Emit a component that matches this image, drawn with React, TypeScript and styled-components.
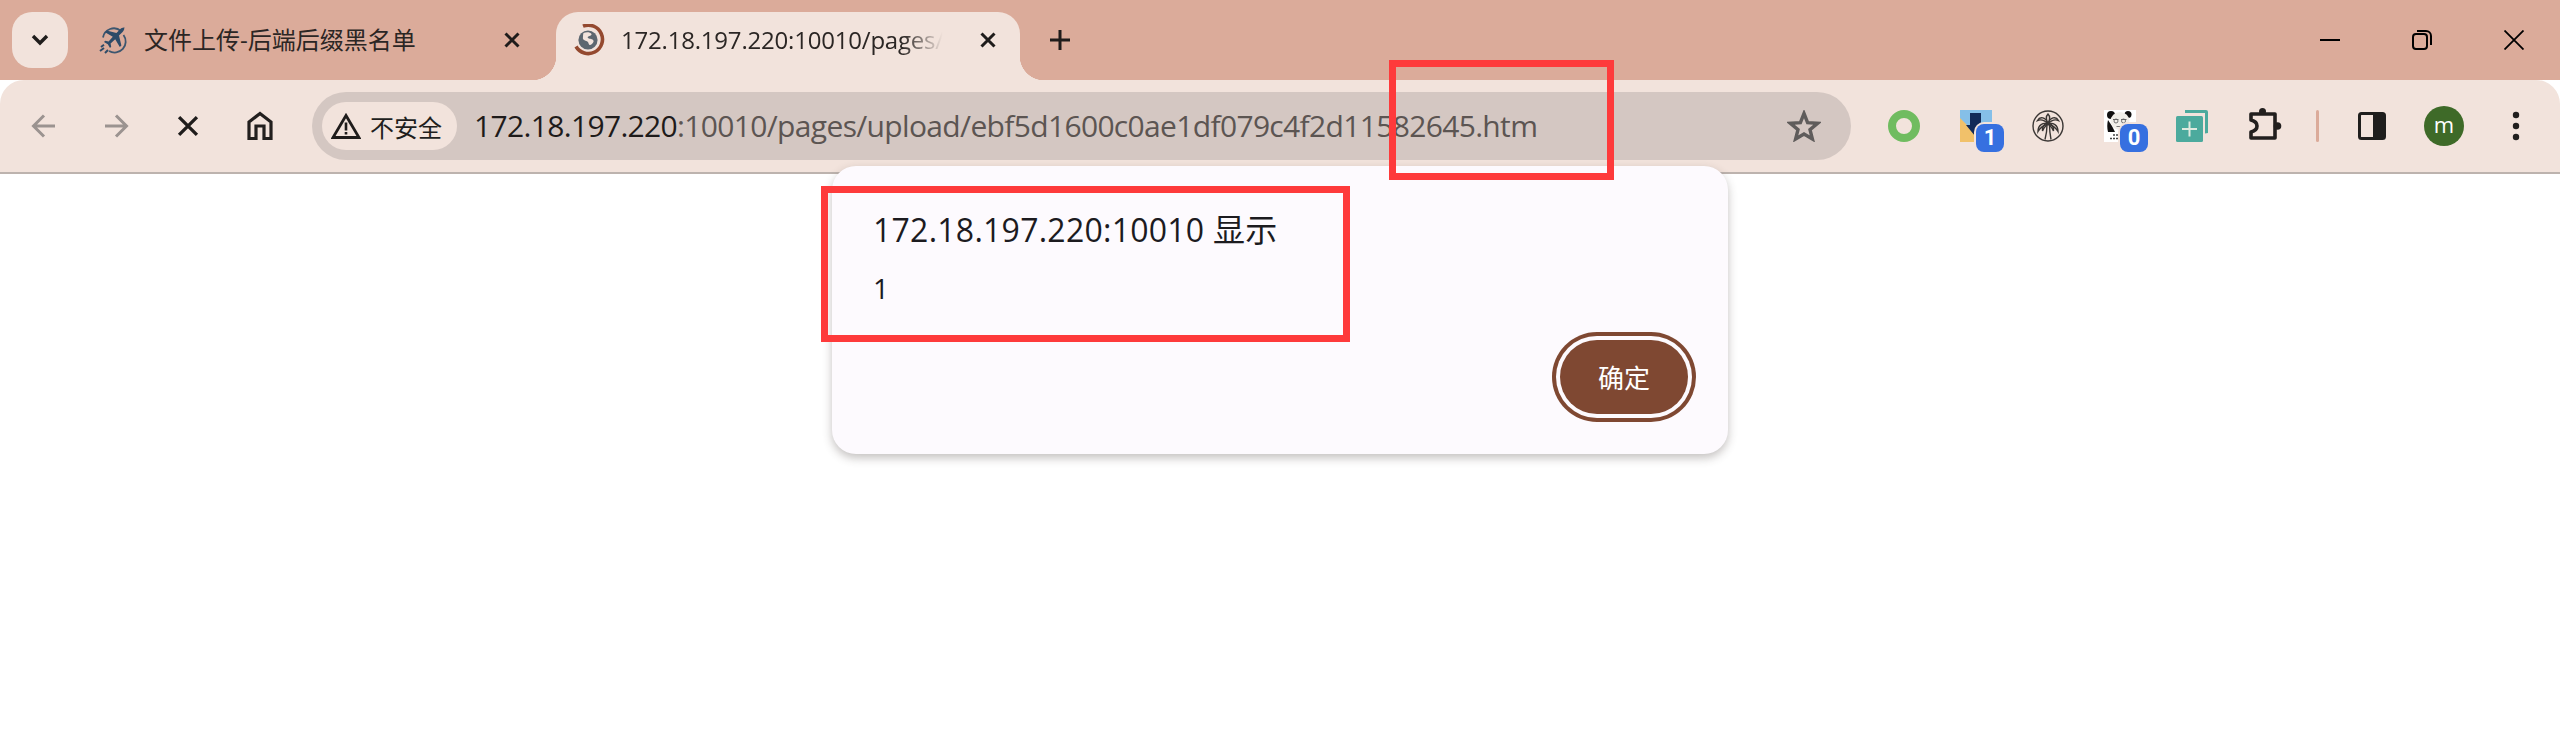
import React from "react";
import styled, { createGlobalStyle } from "styled-components";

const latin = `"Open Sans", "Noto Sans CJK SC", sans-serif`;
const stripBg = "#dbab9a";
const barBg = "#f2e3dc";
const ink = "#211e1d";

const Global = createGlobalStyle`
  html, body { margin: 0; padding: 0; background: #fff; overflow: hidden; }
  body { width: 2560px; height: 752px; font-family: ${latin}; }
`;

const Page = styled.div`
  position: relative;
  width: 2560px;
  height: 752px;
  background: #fff;
  overflow: hidden;
`;

const TabStrip = styled.header`
  display: flex;
  height: 80px;
  padding-left: 12px;
  background: ${stripBg};
  box-sizing: border-box;
`;

const TabSearch = styled.button`
  flex: none;
  width: 56px;
  height: 56px;
  margin-top: 12px;
  border: 0;
  padding: 0;
  border-radius: 20px;
  background: ${barBg};
  display: flex;
  align-items: center;
  justify-content: center;
`;

const Tab = styled.div<{ $active?: boolean }>`
  flex: none;
  position: relative;
  box-sizing: border-box;
  display: flex;
  align-items: center;
  height: 68px;
  margin-top: 12px;
  padding-bottom: 12px;
  width: ${(p) => (p.$active ? "464px" : "488px")};
  padding-left: ${(p) => (p.$active ? "17px" : "30px")};
  padding-right: ${(p) => (p.$active ? "16px" : "28px")};
  gap: 16px;
  border-radius: 22px 22px 0 0;
  background: ${(p) => (p.$active ? barBg : "transparent")};
  ${(p) =>
    p.$active
      ? `
    &::before, &::after {
      content: "";
      position: absolute;
      bottom: 0;
      width: 24px;
      height: 24px;
    }
    &::before { left: -24px; background: radial-gradient(circle at 0 0, transparent 24px, ${barBg} 24.5px); }
    &::after { right: -24px; background: radial-gradient(circle at 100% 0, transparent 24px, ${barBg} 24.5px); }
  `
      : ""}
`;

const TabTitle = styled.span<{ $fade?: boolean }>`
  flex: 1;
  min-width: 0;
  white-space: nowrap;
  font-size: 24px;
  line-height: 32px;
  color: #2b2624;
  letter-spacing: ${(p) => (p.$fade ? "-0.2px" : "0")};
  ${(p) =>
    p.$fade
      ? `-webkit-mask-image: linear-gradient(to right, #000 84%, transparent 96%);
         mask-image: linear-gradient(to right, #000 84%, transparent 96%);`
      : ""}
`;

const TabClose = styled.span`
  flex: none;
  width: 32px;
  height: 32px;
  display: flex;
  align-items: center;
  justify-content: center;
`;

const NewTab = styled.span`
  flex: none;
  width: 32px;
  height: 32px;
  margin: 24px 0 0 24px;
  display: flex;
  align-items: center;
  justify-content: center;
`;

const Spacer = styled.div`
  flex: 1;
`;

const WindowButton = styled.span`
  flex: none;
  width: 92px;
  height: 80px;
  display: flex;
  align-items: center;
  justify-content: center;
`;

const Toolbar = styled.nav`
  position: relative;
  display: flex;
  align-items: center;
  height: 94px;
  box-sizing: border-box;
  padding-left: 8px;
  background: ${barBg};
  border-bottom: 2px solid #bdb3ae;
  border-radius: 24px 24px 0 0;
`;

const Slot = styled.span`
  flex: none;
  position: relative;
  width: 72px;
  height: 48px;
  display: flex;
  align-items: center;
  justify-content: center;
`;

const Omnibox = styled.div`
  flex: none;
  display: flex;
  align-items: center;
  width: 1539px;
  height: 68px;
  margin-left: 16px;
  padding: 0 30px 0 10px;
  box-sizing: border-box;
  border-radius: 34px;
  background: #d4c7c2;
`;

const SecurityChip = styled.div`
  flex: none;
  display: flex;
  align-items: center;
  gap: 9px;
  width: 135px;
  height: 48px;
  padding-left: 9px;
  box-sizing: border-box;
  border-radius: 24px;
  background: ${barBg};
  font-size: 24px;
  color: ${ink};
`;

const Url = styled.div`
  flex: 1;
  margin-left: 17px;
  font-size: 30px;
  line-height: 40px;
  white-space: nowrap;
  color: #5c5552;
  letter-spacing: -0.66px;
`;

const Host = styled.span`
  color: #1e1b1a;
`;

const Actions = styled.div`
  display: flex;
  align-items: center;
  margin-left: 17px;
`;

const Separator = styled.span`
  flex: none;
  width: 3px;
  height: 32px;
  margin: 0 17px 0 16px;
  border-radius: 2px;
  background: ${stripBg};
`;

const Badge = styled.span`
  position: absolute;
  left: 36px;
  top: 22px;
  width: 28px;
  height: 28px;
  border-radius: 8px;
  background: #3670e0;
  box-shadow: 0 0 0 2px ${barBg};
  color: #fff;
  font: 700 22px/28px "Roboto", sans-serif;
  text-align: center;
`;

const Avatar = styled.span`
  width: 40px;
  height: 40px;
  border-radius: 50%;
  background: #3e6a28;
  color: #fff;
  font-size: 22px;
  line-height: 36px;
  text-align: center;
`;

const Dialog = styled.section`
  position: absolute;
  left: 832px;
  top: 166px;
  width: 896px;
  height: 288px;
  box-sizing: border-box;
  padding: 44px 32px 0 41px;
  background: #fdfafe;
  border-radius: 24px;
  box-shadow: 0 4px 10px rgba(60, 50, 45, 0.3);
`;

const DialogTitle = styled.div`
  font-size: 32px;
  line-height: 40px;
  color: #1c1b1f;
  letter-spacing: 0.25px;
`;

const DialogMessage = styled.div`
  margin-top: 22px;
  font-size: 28px;
  line-height: 32px;
  color: #1c1b1f;
`;

const DialogActions = styled.div`
  display: flex;
  justify-content: flex-end;
  margin-top: 36px;
  padding-right: 8px;
`;

const ConfirmButton = styled.button`
  width: 128px;
  height: 74px;
  border: 0;
  padding: 0;
  border-radius: 37px;
  background: #7f4832;
  color: #fff;
  font: 26px ${latin};
  box-shadow: 0 0 0 4px #fdfafe, 0 0 0 8px #7f4832;
`;

const Callout = styled.div<{ $l: number; $t: number; $w: number; $h: number }>`
  position: absolute;
  left: ${(p) => p.$l}px;
  top: ${(p) => p.$t}px;
  width: ${(p) => p.$w}px;
  height: ${(p) => p.$h}px;
  box-sizing: border-box;
  border: 7px solid #fe3a3b;
`;

const X = ({ s = 16, w = 3, c = "#1f1c1b" }: { s?: number; w?: number; c?: string }) => (
  <svg width={s} height={s} viewBox="0 0 16 16">
    <path d="M1.5 1.5 14.5 14.5M14.5 1.5 1.5 14.5" stroke={c} strokeWidth={w} fill="none" />
  </svg>
);

const PlaneIcon = () => (
  <svg width="30" height="30" viewBox="0 0 30 30" fill="none">
    <path d="M5 12.5A11 11 0 0 1 23 6M25.5 10A11 11 0 0 1 11 26" stroke="#3c566f" strokeWidth="1.8" />
    <path d="M27 2.8c-1.6-.6-3.6.2-5 1.6l-3.6 3.6L8.6 5.6 7 7.2l7.8 4.6-4.2 4.6-3.4-.6-1.2 1.2 3.8 2.2 2.2 3.8 1.2-1.2-.6-3.4 4.6-4.2 4.6 7.8 1.6-1.6-2.4-9.8 3.6-3.6c1.4-1.4 2.2-3.4 1.4-5z" fill="#2e4b68" />
    <path d="M2 26l4-3M3 22l3-2.2M7 28l3-3" stroke="#2e4b68" strokeWidth="2" />
  </svg>
);

const GlobeIcon = () => (
  <svg width="32" height="32" viewBox="0 0 32 32" fill="none">
    <path d="M10 2.2A14.2 14.2 0 1 1 3 22.5" stroke="#94492f" strokeWidth="3.6" />
    <circle cx="15" cy="16" r="9.6" fill="#5d6770" />
    <path d="M10.500 9c3-1.200 7-.8 8 1 .6 1.200-1.600 1.800-3.200 2.600-1.200.6-.6 2 1.200 2.200 2 .2 4.600 1 4 3-.8 2-3 3.800-4.200 3-1-1-.4-2.600-2.400-3.600-1.600-.8-4.200-1-4-3.200.2-2 0-3 .6-5z" fill={barBg} />
  </svg>
);

const BackIcon = ({ flip }: { flip?: boolean }) => (
  <svg width="26" height="26" viewBox="0 0 26 26" fill="none" style={flip ? { transform: "scaleX(-1)" } : undefined}>
    <path d="M24 13H3M13 2.500 2.500 13 13 23.500" stroke="#9b9390" strokeWidth="3" />
  </svg>
);

const HomeIcon = () => (
  <svg width="26" height="30" viewBox="0 0 26 30" fill="none">
    <path d="M2 27.500V11L13 2.500 24 11v16.500h-7V15H9v12.500z" stroke="#221f1e" strokeWidth="3.200" strokeLinejoin="miter" />
  </svg>
);

const WarnIcon = () => (
  <svg width="30" height="26" viewBox="0 0 30 26" fill="none">
    <path d="M15 2.500 28 24.500H2z" stroke="#1f1c1b" strokeWidth="2.800" strokeLinejoin="miter" />
    <path d="M15 9.500v8M15 19v2.600" stroke="#1f1c1b" strokeWidth="2.600" />
  </svg>
);

const StarIcon = () => (
  <svg width="34" height="32" viewBox="0 0 34 32" fill="none">
    <path d="M17 3.500 20.600 12.600 30.600 13.300 23 19.600 25.400 29 17 24 8.600 29 11 19.600 3.400 13.300 13.400 12.600z" stroke="#5f5c5b" strokeWidth="3.400" strokeLinejoin="miter" />
  </svg>
);

const RingIcon = () => (
  <svg width="32" height="32" viewBox="0 0 32 32" fill="none">
    <circle cx="16" cy="16" r="12" stroke="#70bc60" strokeWidth="8" />
  </svg>
);

const DownloadExt = () => (
  <svg width="32" height="32" viewBox="0 0 32 32">
    <rect width="32" height="32" fill="#85bfe8" />
    <path d="M0 8 24 32H0z" fill="#f1c16a" />
    <path d="M10 3h11v11h5L15 26 6 15h4z" fill="#122a58" />
  </svg>
);

const PalmExt = () => (
  <svg width="32" height="32" viewBox="0 0 32 32" fill="none" stroke="#3a3634" strokeWidth="1.400">
    <circle cx="16" cy="16" r="15" />
    <path d="M15 15c0 5-.5 9-2 14.500M17.500 15c0 5 .5 9 1.500 14.500" />
    <path d="M16 14C14 7 8 6 5.500 10.500c3.500-1.500 7-.5 10.500 3.500zM16 14c2-7 8-8 10.500-3.500-3.500-1.500-7-.5-10.500 3.500z" />
    <path d="M16 14c-5-2-10 1-10 7.500 2-3.500 5-6 10-7.500zM16 14c5-2 10 1 10 7.500-2-3.500-5-6-10-7.500z" />
    <path d="M16 14c-4-1-6 3-5.500 7 1-3 3-5 5.500-7zM16 14c4-1 6 3 5.500 7-1-3-3-5-5.500-7z" />
    <path d="M16 14c-2.500-5-1.500-8.500 0-10 1.500 1.500 2.500 5 0 10z" />
  </svg>
);

const PandaExt = () => (
  <svg width="32" height="32" viewBox="0 0 32 32">
    <rect width="32" height="32" fill="#fff" />
    <circle cx="7" cy="5" r="4" fill="#111" />
    <circle cx="24" cy="4.500" r="3.500" fill="#111" />
    <path d="M4 10c-1 4-1 8 0 12h7l-3-6z" fill="#111" />
    <ellipse cx="16" cy="11" rx="9.500" ry="9" fill="#f1efe9" />
    <path d="M9 9.500h5.500M17 9.500h5.500" stroke="#666" strokeWidth="1.200" />
    <circle cx="12" cy="11" r="2" fill="none" stroke="#666" strokeWidth="0.900" />
    <circle cx="19.500" cy="11" r="2" fill="none" stroke="#666" strokeWidth="0.900" />
    <path d="M12.500 16.500h7" stroke="#777" strokeWidth="1" />
    <path d="M9 25h11M6 28.500h19" stroke="#444" strokeWidth="1.500" strokeDasharray="2 1" />
  </svg>
);

const TealExt = () => (
  <svg width="32" height="32" viewBox="0 0 32 32">
    <path d="M9 0h21a2 2 0 0 1 2 2v21l-3 .5V3H9z" fill="#4caa9d" />
    <rect x="0" y="6" width="27" height="26" rx="1.500" fill="#4caa9d" />
    <path d="M13.500 11.500v15M6 19h15" stroke="#dfe9df" strokeWidth="2" />
  </svg>
);

const PuzzleIcon = () => (
  <svg width="36" height="36" viewBox="0 0 36 36" fill="none">
    <path d="M5 6h24v24H5v-6c4-1 6-3 6-6s-2-5-6-6z" stroke="#221f1e" strokeWidth="3.600" strokeLinejoin="round" />
    <circle cx="16.500" cy="3.500" r="3.500" fill="#221f1e" />
    <circle cx="31.500" cy="18" r="3.800" fill="#221f1e" />
  </svg>
);

const SidebarIcon = () => (
  <svg width="28" height="28" viewBox="0 0 28 28" fill="none">
    <rect x="1.500" y="1.500" width="25" height="25" rx="2" stroke="#1f1e1d" strokeWidth="3" />
    <rect x="15" y="1.500" width="11.500" height="25" fill="#1f1e1d" />
  </svg>
);

const DotsIcon = () => (
  <svg width="8" height="32" viewBox="0 0 8 32">
    <circle cx="4" cy="5" r="3.200" fill="#221f1e" />
    <circle cx="4" cy="16" r="3.200" fill="#221f1e" />
    <circle cx="4" cy="27" r="3.200" fill="#221f1e" />
  </svg>
);

export default function App() {
  return (
    <Page>
      <Global />
      <TabStrip>
        <TabSearch aria-label="tabs">
          <svg width="18" height="12" viewBox="0 0 18 12" fill="none">
            <path d="M2 2l7 7 7-7" stroke="#1f1c1b" strokeWidth="3.400" />
          </svg>
        </TabSearch>
        <Tab>
          <PlaneIcon />
          <TabTitle>文件上传-后端后缀黑名单</TabTitle>
          <TabClose><X /></TabClose>
        </Tab>
        <Tab $active>
          <GlobeIcon />
          <TabTitle $fade>172.18.197.220:10010/pages/</TabTitle>
          <TabClose><X /></TabClose>
        </Tab>
        <NewTab>
          <svg width="22" height="22" viewBox="0 0 22 22" fill="none">
            <path d="M11 1v20M1 11h20" stroke="#1f1c1b" strokeWidth="3" />
          </svg>
        </NewTab>
        <Spacer />
        <WindowButton>
          <svg width="20" height="4" viewBox="0 0 20 4"><path d="M0 2h20" stroke="#000" strokeWidth="2" /></svg>
        </WindowButton>
        <WindowButton>
          <svg width="20" height="20" viewBox="0 0 20 20" fill="none" stroke="#000" strokeWidth="2">
            <rect x="1" y="4" width="14" height="15" rx="3" />
            <path d="M5 1h9a5 5 0 0 1 5 5v9" />
          </svg>
        </WindowButton>
        <WindowButton>
          <svg width="20" height="20" viewBox="0 0 20 20"><path d="M.5.500l19 19M19.500.500l-19 19" stroke="#000" strokeWidth="1.800" /></svg>
        </WindowButton>
      </TabStrip>
      <Toolbar>
        <Slot><BackIcon /></Slot>
        <Slot><BackIcon flip /></Slot>
        <Slot><X s={22} w={2.4} /></Slot>
        <Slot><HomeIcon /></Slot>
        <Omnibox>
          <SecurityChip><WarnIcon />不安全</SecurityChip>
          <Url><Host>172.18.197.220</Host>:10010/pages/upload/ebf5d1600c0ae1df079c4f2d11582645.htm</Url>
          <StarIcon />
        </Omnibox>
        <Actions>
          <Slot><RingIcon /></Slot>
          <Slot><DownloadExt /><Badge>1</Badge></Slot>
          <Slot><PalmExt /></Slot>
          <Slot><PandaExt /><Badge>0</Badge></Slot>
          <Slot><TealExt /></Slot>
          <Slot><PuzzleIcon /></Slot>
          <Separator />
          <Slot><SidebarIcon /></Slot>
          <Slot><Avatar>m</Avatar></Slot>
          <Slot><DotsIcon /></Slot>
        </Actions>
      </Toolbar>
      <Dialog>
        <DialogTitle>172.18.197.220:10010 显示</DialogTitle>
        <DialogMessage>1</DialogMessage>
        <DialogActions><ConfirmButton>确定</ConfirmButton></DialogActions>
      </Dialog>
      <Callout $l={1389} $t={60} $w={225} $h={120} />
      <Callout $l={821} $t={186} $w={529} $h={156} />
    </Page>
  );
}
